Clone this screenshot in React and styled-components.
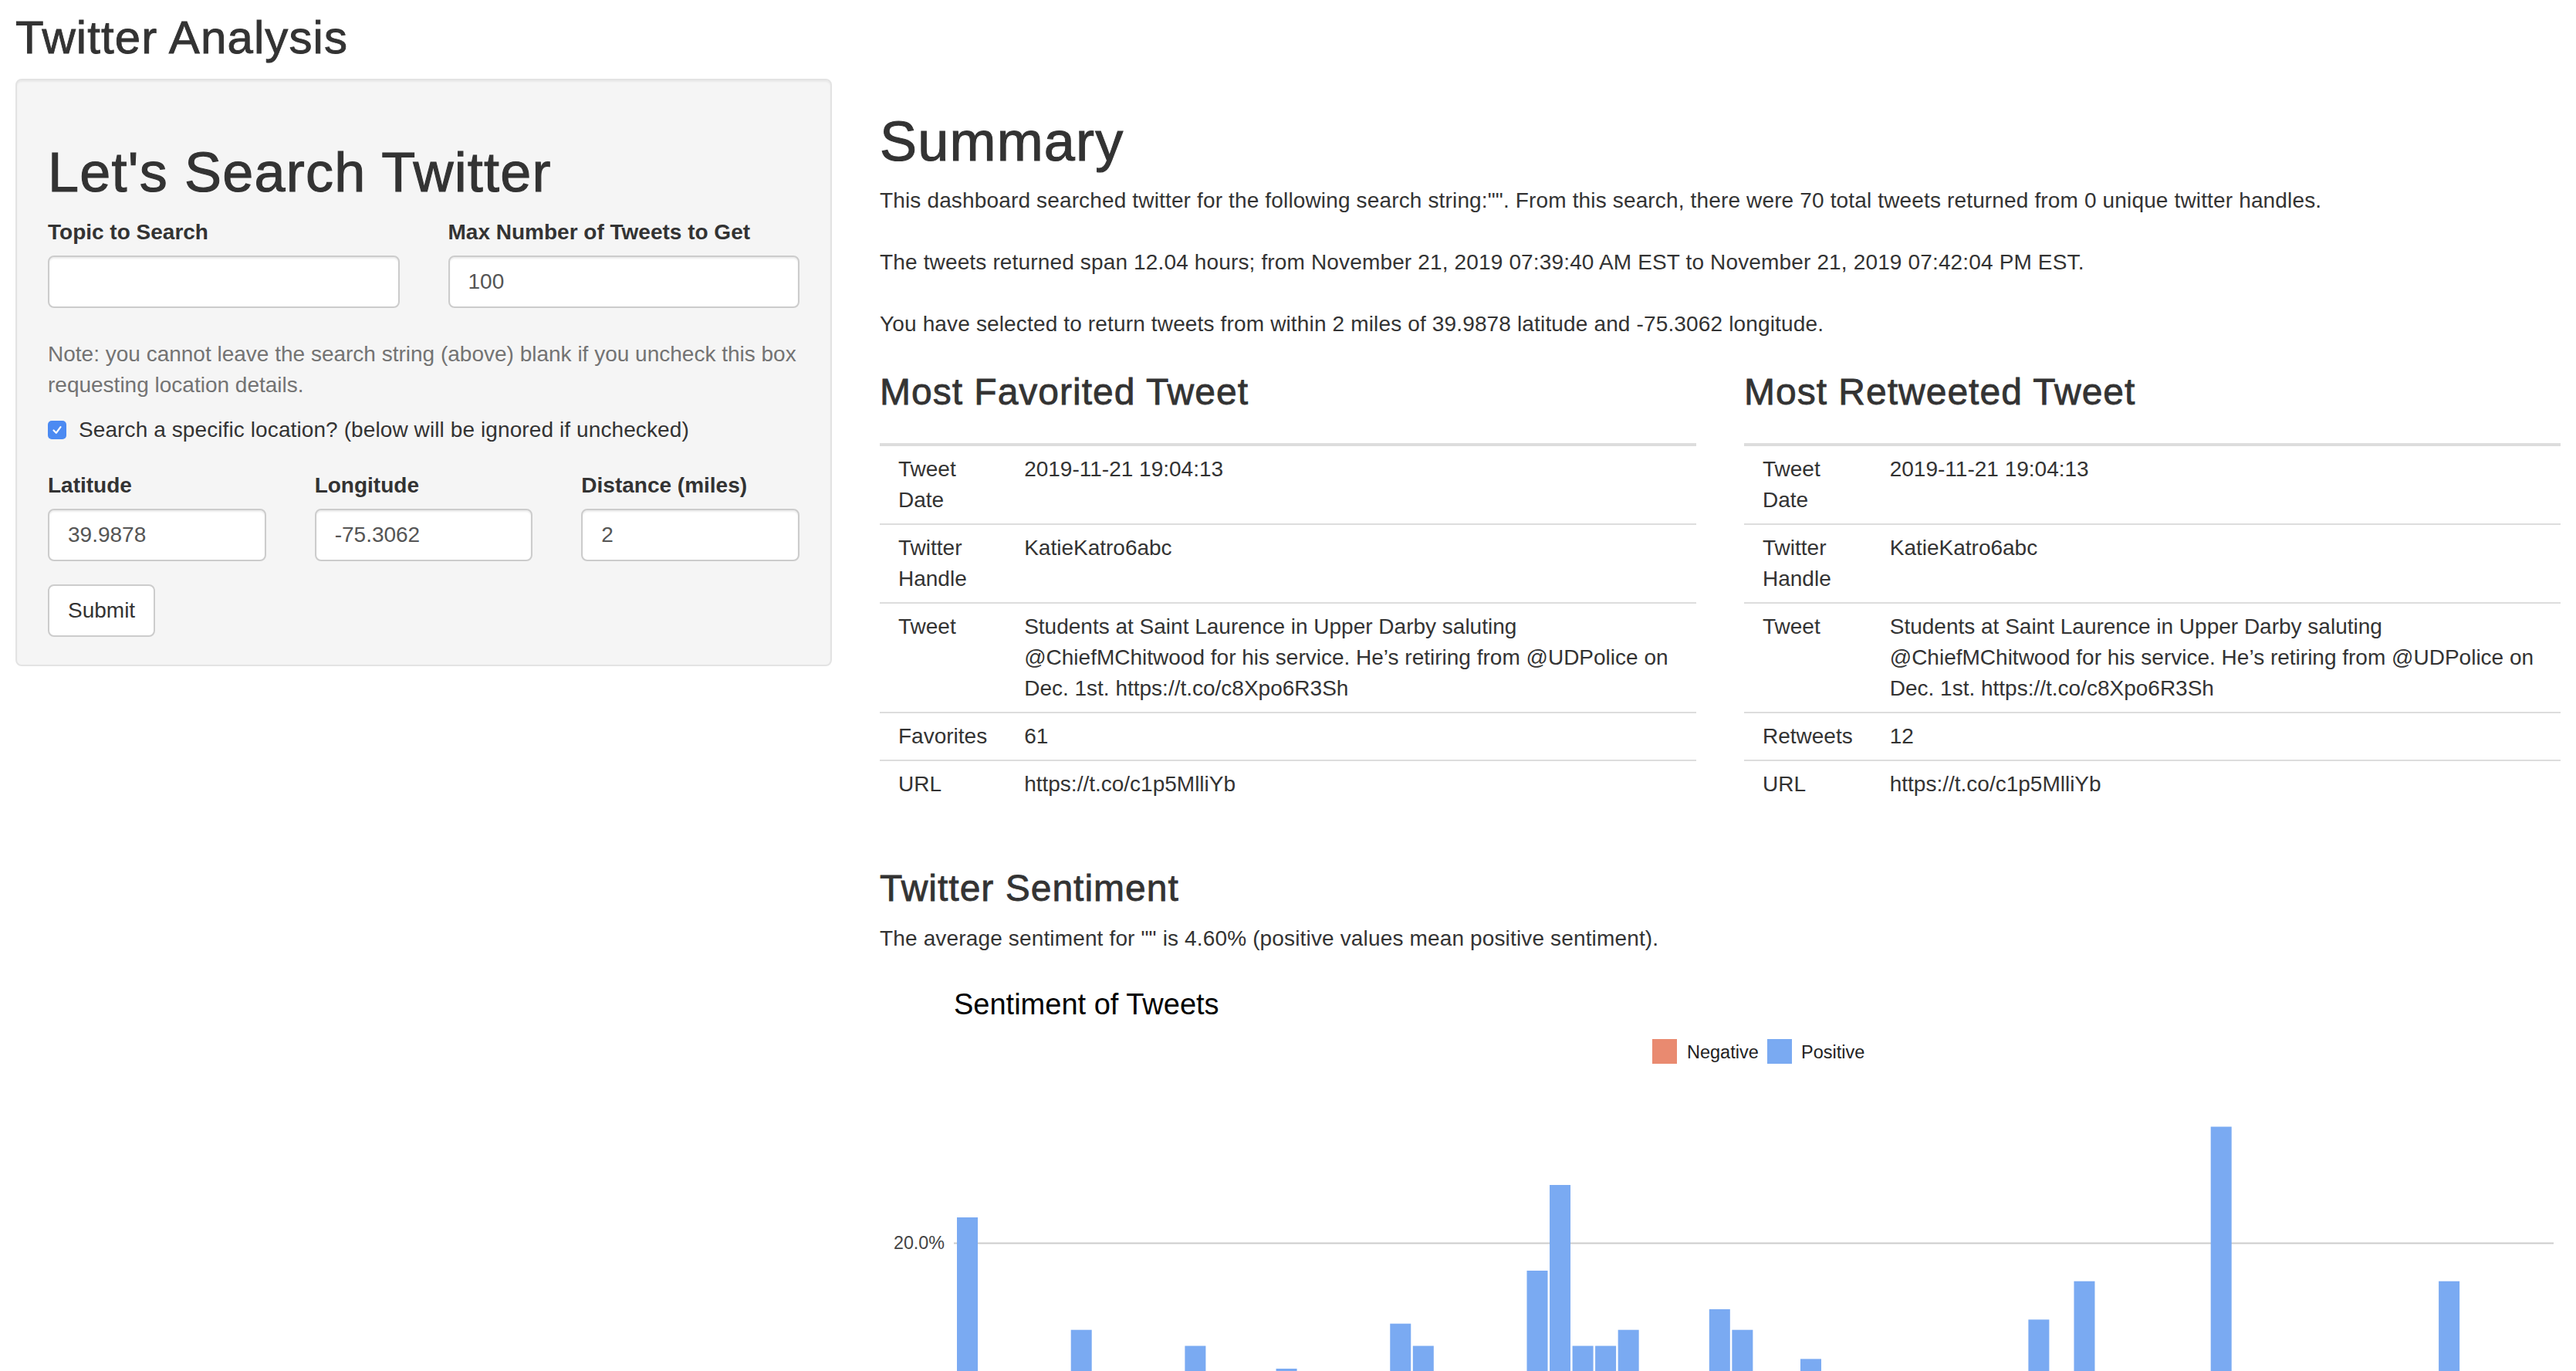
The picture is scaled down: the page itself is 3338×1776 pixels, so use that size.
import React from "react";
import styled, { createGlobalStyle } from "styled-components";

const GlobalStyle = createGlobalStyle`
  * { box-sizing: border-box; }
  html, body {
    margin: 0;
    padding: 0;
    background: #ffffff;
    overflow: hidden;
  }
  body {
    font-family: "Liberation Sans", Arial, Helvetica, sans-serif;
    font-size: 28px;
    line-height: 40px;
    color: #333333;
  }
`;

const Page = styled.div`
  padding: 0 20px;
`;

const PageTitle = styled.h2`
  margin: 16px 0 20px;
  font-size: 60px;
  line-height: 66px;
  font-weight: 500;
  letter-spacing: 1.1px;
  -webkit-text-stroke: 0.9px #333333;
  color: #333333;
`;

const Layout = styled.div`
  display: grid;
  grid-template-columns: 1058px 1fr;
  column-gap: 62px;
  align-items: start;
`;

const Well = styled.form`
  background: #f5f5f5;
  border: 2px solid #e3e3e3;
  border-radius: 8px;
  box-shadow: inset 0 2px 2px rgba(0, 0, 0, 0.05);
  padding: 40px 40px 36px;
`;

const BigHeading = styled.h1`
  margin: ${(p) => p.$top}px 0 ${(p) => p.$bottom}px;
  font-size: 72px;
  line-height: 79.2px;
  font-weight: 500;
  letter-spacing: 1.2px;
  -webkit-text-stroke: 1.1px #333333;
  color: #333333;
`;

const FieldGrid = styled.div`
  display: grid;
  grid-template-columns: repeat(${(p) => p.$cols}, 1fr);
  column-gap: 63px;
  margin-top: ${(p) => p.$top || 0}px;
`;

const Field = styled.div`
  display: flex;
  flex-direction: column;
`;

const Label = styled.label`
  display: block;
  font-weight: 700;
  line-height: 40px;
  margin-bottom: 10px;
  color: #333333;
`;

const TextInput = styled.input`
  display: block;
  width: 100%;
  height: 68px;
  padding: 0 24px;
  font-family: inherit;
  font-size: 28px;
  color: #555555;
  background: #ffffff;
  border: 2px solid #cccccc;
  border-radius: 8px;
  box-shadow: inset 0 2px 2px rgba(0, 0, 0, 0.075);
  outline: none;
`;

const HelpText = styled.p`
  margin: 40px 0 0;
  color: #737373;
`;

const CheckRow = styled.label`
  display: flex;
  align-items: center;
  gap: 16px;
  margin-top: 18px;
  line-height: 40px;
  letter-spacing: 0.1px;
  color: #333333;
`;

const CheckBox = styled.span`
  display: inline-flex;
  align-items: center;
  justify-content: center;
  width: 24px;
  height: 24px;
  border-radius: 5px;
  background: #4b8af2;
  flex: none;
`;

const SubmitButton = styled.button`
  display: block;
  margin-top: 30px;
  height: 68px;
  padding: 0 24px;
  font-family: inherit;
  font-size: 28px;
  color: #333333;
  background: #ffffff;
  border: 2px solid #cccccc;
  border-radius: 8px;
`;

const Main = styled.div`
  min-width: 0;
`;

const Paragraph = styled.p`
  margin: ${(p) => p.$top || 0}px 0 ${(p) => p.$bottom || 0}px;
  letter-spacing: 0.15px;
`;

const TweetColumns = styled.div`
  display: grid;
  grid-template-columns: 1fr 1fr;
  column-gap: 62px;
  margin-top: 42px;
`;

const SectionHeading = styled.h3`
  margin: ${(p) => p.$top || 0}px 0 0;
  font-size: 48px;
  line-height: 52.8px;
  font-weight: 500;
  letter-spacing: 1px;
  -webkit-text-stroke: 0.8px #333333;
  color: #333333;
`;

const Table = styled.table`
  width: 100%;
  margin-top: 39px;
  border-collapse: separate;
  border-spacing: 0;
`;

const Row = styled.tr`
  &:first-child td {
    border-top-width: 4px;
  }
`;

const Cell = styled.td`
  padding: 10px 24px;
  border-top: 2px solid #dddddd;
  vertical-align: top;
  line-height: 40px;
  color: #333333;
  width: ${(p) => (p.$key ? "1%" : "auto")};
`;

const ChartSvg = styled.svg`
  display: block;
  margin-top: 20px;
`;

const tweet = {
  date: "2019-11-21 19:04:13",
  handle: "KatieKatro6abc",
  text:
    "Students at Saint Laurence in Upper Darby saluting @ChiefMChitwood for his service. He\u2019s retiring from @UDPolice on Dec. 1st. https://t.co/c8Xpo6R3Sh",
  url: "https://t.co/c1p5MlliYb",
};

function TweetTable({ countLabel, count }) {
  const rows = [
    ["Tweet Date", tweet.date],
    ["Twitter Handle", tweet.handle],
    ["Tweet", tweet.text],
    [countLabel, count],
    ["URL", tweet.url],
  ];
  return (
    <Table>
      <tbody>
        {rows.map(([k, v]) => (
          <Row key={k}>
            <Cell $key>{k}</Cell>
            <Cell>{v}</Cell>
          </Row>
        ))}
      </tbody>
    </Table>
  );
}

const bars = [
  [0, 22.79], [5, 10.65], [10, 8.92], [14, 6.46], [19, 11.32], [20, 8.92],
  [25, 17.04], [26, 26.29], [27, 8.92], [28, 8.92], [29, 10.65], [33, 12.875],
  [34, 10.65], [37, 7.51], [47, 11.76], [49, 15.9], [55, 32.58], [65, 15.9],
];

const CHART_W = 2178;
const CHART_H = 520;
const GRID_Y = 354.5;
const PX_PER_PCT = 12;
const FONT = "Liberation Sans, Arial, sans-serif";

function SentimentChart() {
  const yFor = (v) => GRID_Y - (v - 20) * PX_PER_PCT;
  return (
    <ChartSvg width={CHART_W} height={CHART_H} viewBox={`0 0 ${CHART_W} ${CHART_H}`}>
      <text x="96" y="58.4" fontFamily={FONT} fontSize="38" fill="#000">
        Sentiment of Tweets
      </text>
      <rect x="1001" y="90" width="32" height="32" fill="#e98a70" />
      <text x="1046" y="114.7" fontFamily={FONT} fontSize="23.5" fill="#222">
        Negative
      </text>
      <rect x="1150" y="90" width="32" height="32" fill="#7aaaf2" />
      <text x="1194" y="114.7" fontFamily={FONT} fontSize="23.5" fill="#222">
        Positive
      </text>
      <rect x="96" y={GRID_Y - 1} width="2073" height="2" fill="#cccccc" />
      <text x="84" y="362.3" textAnchor="end" fontFamily={FONT} fontSize="23.3" fill="#444">
        20.0%
      </text>
      {bars.map(([i, v]) => {
        const y = yFor(v);
        return <rect key={i} x={100 + i * 29.54} y={y} width="27" height={CHART_H - y} fill="#7aaaf2" />;
      })}
    </ChartSvg>
  );
}

function Check() {
  return (
    <svg width="16" height="16" viewBox="0 0 16 16">
      <polyline points="3.5,8.5 6.8,11.8 12.5,4.2" fill="none" stroke="#fff" strokeWidth="2.2" strokeLinecap="round" strokeLinejoin="round" />
    </svg>
  );
}

export default function App() {
  return (
    <>
      <GlobalStyle />
      <Page>
        <PageTitle>Twitter Analysis</PageTitle>
        <Layout>
          <Well onSubmit={(e) => e.preventDefault()}>
            <BigHeading $top={40} $bottom={18}>Let's Search Twitter</BigHeading>
            <FieldGrid $cols={2}>
              <Field>
                <Label>Topic to Search</Label>
                <TextInput defaultValue="" />
              </Field>
              <Field>
                <Label>Max Number of Tweets to Get</Label>
                <TextInput defaultValue="100" />
              </Field>
            </FieldGrid>
            <HelpText>
              Note: you cannot leave the search string (above) blank if you uncheck this box requesting location details.
            </HelpText>
            <CheckRow>
              <CheckBox>
                <Check />
              </CheckBox>
              Search a specific location? (below will be ignored if unchecked)
            </CheckRow>
            <FieldGrid $cols={3} $top={32}>
              <Field>
                <Label>Latitude</Label>
                <TextInput defaultValue="39.9878" />
              </Field>
              <Field>
                <Label>Longitude</Label>
                <TextInput defaultValue="-75.3062" />
              </Field>
              <Field>
                <Label>Distance (miles)</Label>
                <TextInput defaultValue="2" />
              </Field>
            </FieldGrid>
            <SubmitButton type="submit">Submit</SubmitButton>
          </Well>

          <Main>
            <BigHeading $top={42} $bottom={17}>Summary</BigHeading>
            <Paragraph $bottom={40}>
              This dashboard searched twitter for the following search string:"". From this search, there were 70 total tweets returned from 0 unique twitter handles.
            </Paragraph>
            <Paragraph $bottom={40}>
              The tweets returned span 12.04 hours; from November 21, 2019 07:39:40 AM EST to November 21, 2019 07:42:04 PM EST.
            </Paragraph>
            <Paragraph>
              You have selected to return tweets from within 2 miles of 39.9878 latitude and -75.3062 longitude.
            </Paragraph>
            <TweetColumns>
              <div>
                <SectionHeading>Most Favorited Tweet</SectionHeading>
                <TweetTable countLabel="Favorites" count="61" />
              </div>
              <div>
                <SectionHeading>Most Retweeted Tweet</SectionHeading>
                <TweetTable countLabel="Retweets" count="12" />
              </div>
            </TweetColumns>
            <SectionHeading $top={79}>Twitter Sentiment</SectionHeading>
            <Paragraph $top={18}>
              The average sentiment for "" is 4.60% (positive values mean positive sentiment).
            </Paragraph>
            <SentimentChart />
          </Main>
        </Layout>
      </Page>
    </>
  );
}
